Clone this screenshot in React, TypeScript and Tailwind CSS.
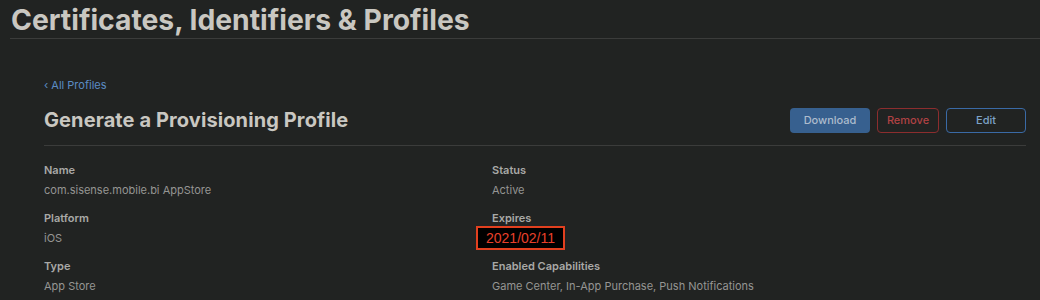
const fields = [
  { label: "Name", value: "com.sisense.mobile.bi AppStore" },
  { label: "Status", value: "Active" },
  { label: "Platform", value: "iOS" },
  { label: "Expires", value: "2021/02/11", marked: true },
  { label: "Type", value: "App Store" },
  { label: "Enabled Capabilities", value: "Game Center, In-App Purchase, Push Notifications" },
];

const Field = ({ label, value, marked }: { label: string; value: string; marked?: boolean }) => (
  <div className="h-[48px]">
    <div className="text-[11px] font-semibold leading-[14px] text-[#a9a9a7]">{label}</div>
    {marked ? (
      <div className="-ml-[16px] -mt-[3px] inline-block border-2 border-[#e2401f] bg-black px-[8px] text-[14px] leading-[20px] text-[#e8402a] [font-family:'Liberation_Sans',Arial,sans-serif]">
        {value}
      </div>
    ) : (
      <div className="mt-[6px] text-[11px] leading-[14px] text-[#959593]">{value}</div>
    )}
  </div>
);

export default function App() {
  return (
    <div className="h-[300px] w-[1040px] overflow-hidden bg-[#212322] [font-family:Inter,'Noto_Sans',sans-serif]">
      <div className="ml-[10px] border-b border-[#3b3c3b] pl-[1px]">
        <h1 className="h-[38px] text-[28.3px] font-bold leading-[40px] text-[#c9c7c1]">
          Certificates, Identifiers &amp; Profiles
        </h1>
      </div>

      <div className="pl-[44px] pr-[14px]">
        <a className="mt-[39px] block text-[11px] leading-[14px] text-[#5b8cc4]">‹ All Profiles</a>

        <div className="mt-[13px] flex items-center justify-between border-b border-[#3b3c3b] pb-[10px]">
          <h2 className="text-[20px] font-bold leading-[30px] tracking-[0.1px] text-[#c9c7c1]">
            Generate a Provisioning Profile
          </h2>
          <div className="flex gap-[7px] text-[11px] font-medium">
            <button className="h-[25px] w-[80px] rounded-[4px] bg-[#37608f] text-[#adbccd]">Download</button>
            <button className="h-[25px] w-[62px] rounded-[4px] border border-[#8c2d2e] text-[#b04244]">Remove</button>
            <button className="h-[25px] w-[80px] rounded-[4px] border border-[#3a6aa6] text-[#7ea2c8]">Edit</button>
          </div>
        </div>

        <div className="mt-[17px] grid grid-cols-[448px_1fr]">
          {fields.map((f) => (
            <Field key={f.label} {...f} />
          ))}
        </div>
      </div>
    </div>
  );
}
